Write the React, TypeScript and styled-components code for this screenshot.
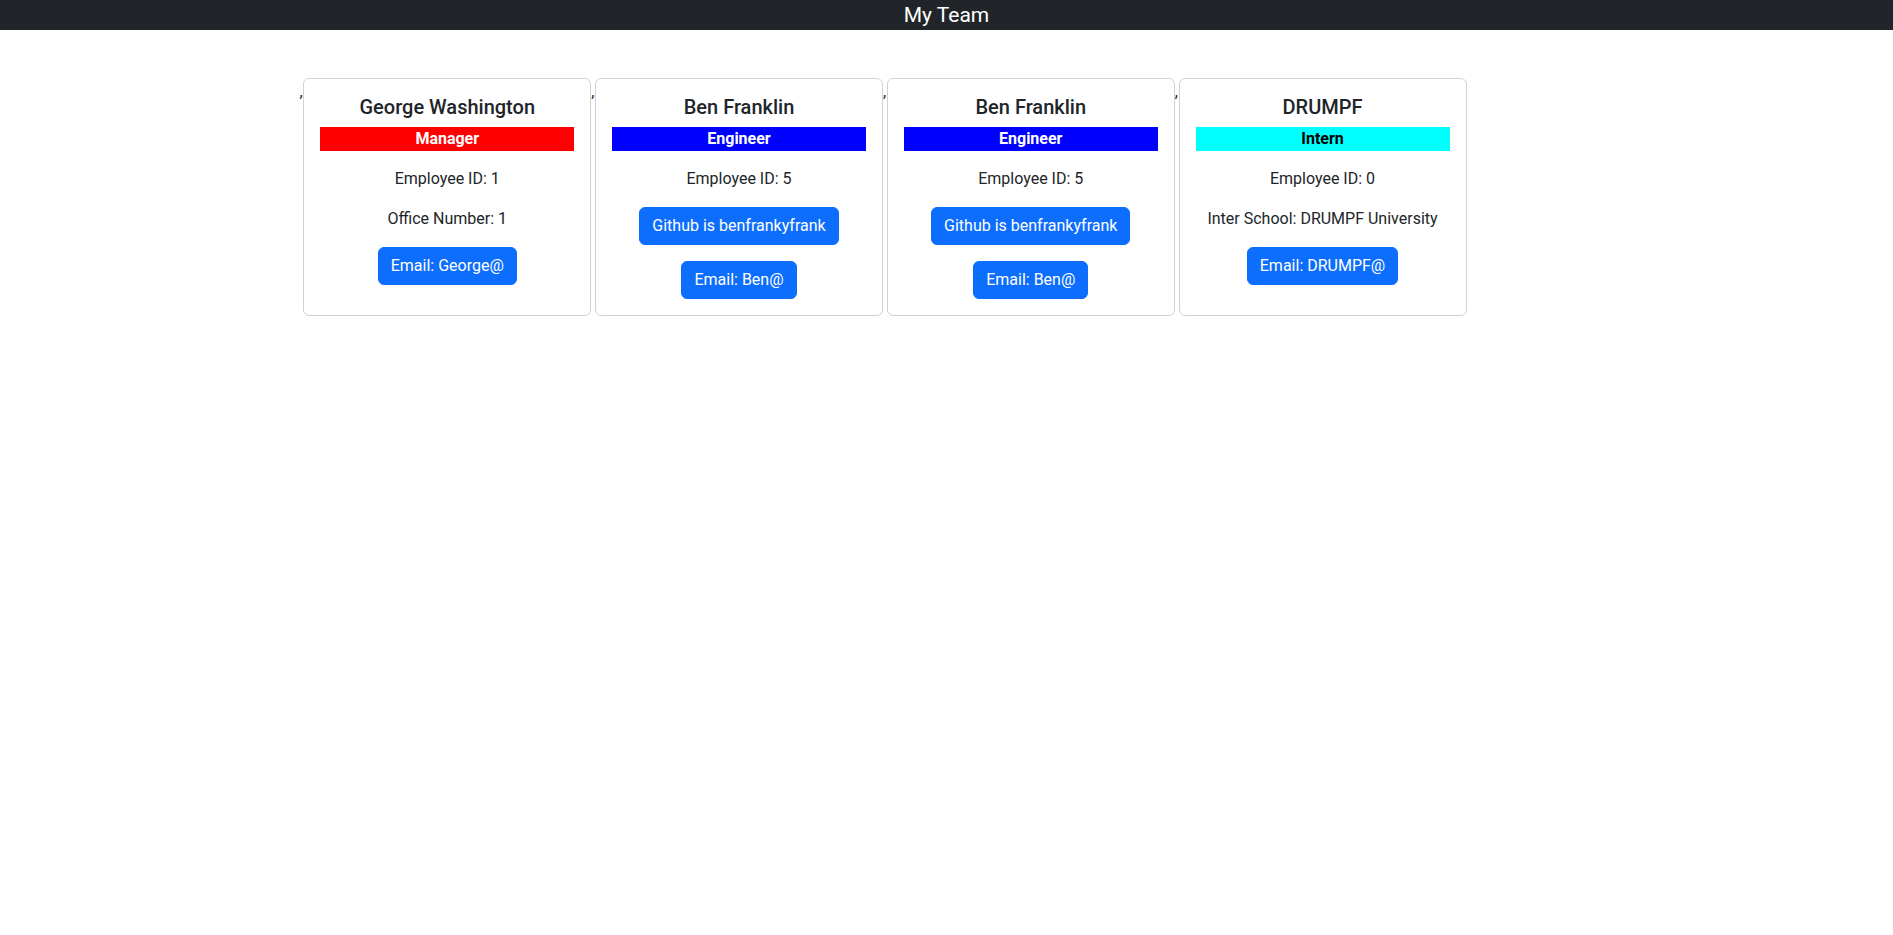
import React from "react";
import styled, { createGlobalStyle } from "styled-components";

const GlobalStyle = createGlobalStyle`
  *, *::before, *::after { box-sizing: border-box; }
  body {
    margin: 0;
    background: #ffffff;
    color: #212529;
    font-family: Roboto, "Liberation Sans", sans-serif;
    font-size: 16px;
    line-height: 1.5;
  }
`;

const Header = styled.header`
  background: #212529;
  color: #ffffff;
  height: 30px;
  font-size: 21px;
  line-height: 30px;
  text-align: center;
`;

const Container = styled.main`
  max-width: 1320px;
  margin: 48px auto 0;
  padding: 0 12px 0 13px;
  display: flex;
  flex-wrap: wrap;
  align-items: stretch;
`;

const Comma = styled.span`
  display: block;
  flex: 0 0 3.75px;
  min-width: 0;
  font-size: 16px;
  line-height: 24px;
  padding-top: 2px;
  overflow: visible;
`;

const Card = styled.section`
  width: 288px;
  border: 1px solid rgba(0, 0, 0, 0.175);
  border-radius: 6px;
  padding: 16px;
  display: flex;
  flex-direction: column;
  align-items: center;
  text-align: center;
`;

const Name = styled.h5`
  margin: 0 0 8px;
  font-size: 20px;
  font-weight: 500;
  line-height: 24px;
`;

const RoleBar = styled.div<{ $bg: string; $fg: string }>`
  align-self: stretch;
  background: ${(p) => p.$bg};
  color: ${(p) => p.$fg};
  font-weight: 700;
  line-height: 24px;
  margin-bottom: 16px;
`;

const Info = styled.p`
  margin: 0 0 16px;
  line-height: 24px;
`;

const Button = styled.a`
  display: inline-block;
  background: #0d6efd;
  border: 1px solid #0d6efd;
  color: #ffffff;
  border-radius: 6px;
  padding: 6px 12px;
  line-height: 24px;
  font-size: 16px;
  text-decoration: none;
  cursor: pointer;
  & + & { margin-top: 16px; }
`;

type Employee = {
  name: string;
  role: "Manager" | "Engineer" | "Intern";
  id: number;
  extra?: string;
  github?: string;
  email: string;
};

const roleColors: Record<Employee["role"], { bg: string; fg: string }> = {
  Manager: { bg: "#ff0000", fg: "#ffffff" },
  Engineer: { bg: "#0000ff", fg: "#ffffff" },
  Intern: { bg: "#00ffff", fg: "#000000" },
};

const team: Employee[] = [
  { name: "George Washington", role: "Manager", id: 1, extra: "Office Number: 1", email: "George@" },
  { name: "Ben Franklin", role: "Engineer", id: 5, github: "benfrankyfrank", email: "Ben@" },
  { name: "Ben Franklin", role: "Engineer", id: 5, github: "benfrankyfrank", email: "Ben@" },
  { name: "DRUMPF", role: "Intern", id: 0, extra: "Inter School: DRUMPF University", email: "DRUMPF@" },
];

export default function App() {
  return (
    <>
      <GlobalStyle />
      <Header>My Team</Header>
      <Container>
        {team.map((e, i) => (
          <React.Fragment key={i}>
            <Comma>,</Comma>
            <Card>
              <Name>{e.name}</Name>
              <RoleBar $bg={roleColors[e.role].bg} $fg={roleColors[e.role].fg}>
                {e.role}
              </RoleBar>
              <Info>Employee ID: {e.id}</Info>
              {e.extra && <Info>{e.extra}</Info>}
              {e.github && <Button>Github is {e.github}</Button>}
              <Button>Email: {e.email}</Button>
            </Card>
          </React.Fragment>
        ))}
      </Container>
    </>
  );
}
